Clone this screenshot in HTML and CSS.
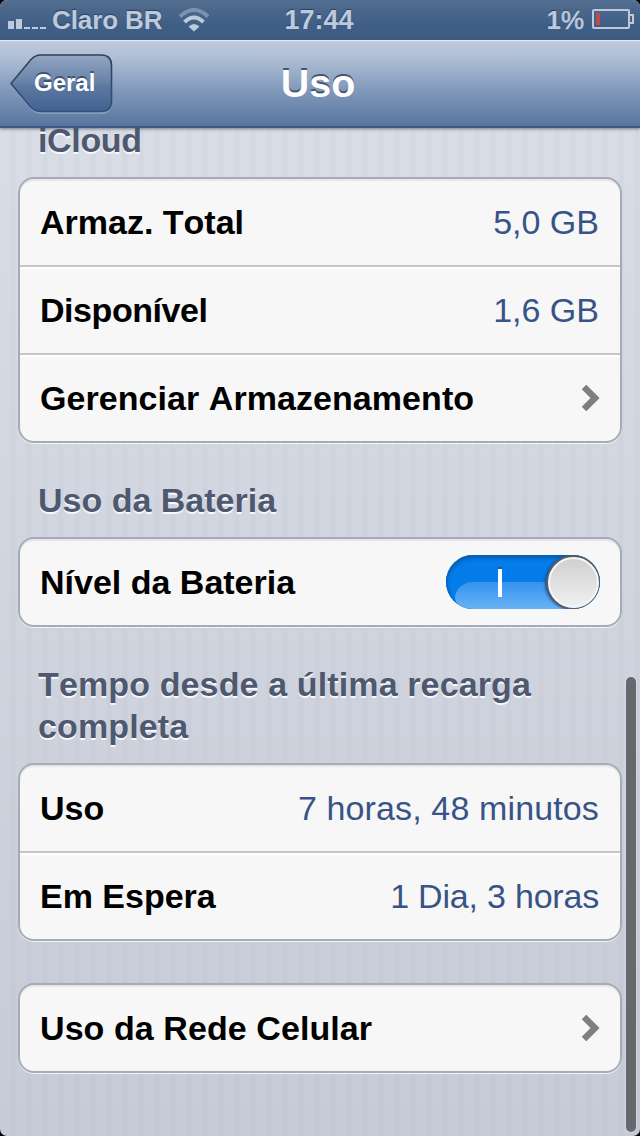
FILE: index.html
```html
<!DOCTYPE html>
<html lang="pt-BR">
<head>
<meta charset="utf-8">
<title>Uso</title>
<link rel="stylesheet" href="styles.css">
</head>
<body>
<div class="screen">
  <header class="status">
    <div class="carrier">
      <svg class="signal" width="38" height="20" viewBox="0 0 38 20"><path d="M0 11h6v8H0zM8 9h6v10H8zM16 17h6v2h-6zM24 17h6v2h-6zM32 17h6v2h-6z"/></svg>
      <span class="carrier-name">Claro BR</span>
      <svg class="wifi" width="32" height="24" viewBox="0 0 32 24"><g fill="none" stroke-width="4"><path class="faint" d="M2 8.500Q16-4.500 30 8.500"/><path class="lit" d="M6.500 14Q16 5 25.500 14"/></g><path class="dot" d="M10.500 18.500Q16 13.500 21.500 18.500L16 23.500z"/></svg>
    </div>
    <div class="clock">17:44</div>
    <div class="power"><span>1<span class="percent">%</span></span>
      <svg class="battery" width="42" height="20" viewBox="0 0 42 20"><rect class="line" x="1" y="1" width="36" height="18" rx="1"/><path class="line" d="M38 6h3v8h-3"/><path class="charge" d="M4 4h4v12H4z"/></svg>
    </div>
  </header>
  <nav class="bar">
    <a class="back">
      <svg class="back-shape" width="104" height="62" viewBox="0 0 104 62">
        <defs><linearGradient id="backFill" x1="0" y1="0" x2="0" y2="1"><stop offset="0" stop-color="#94a7c3"/><stop offset=".5" stop-color="#6680a7"/><stop offset=".55" stop-color="#5c78a2"/><stop offset="1" stop-color="#426290"/></linearGradient>
        <linearGradient id="backEdge" x1="0" y1="0" x2="0" y2="1"><stop offset="0" stop-color="#343f51"/><stop offset="1" stop-color="#345078"/></linearGradient></defs>
        <path class="glow" d="M1 31L21 6Q25 2.500 31 2.500H91Q102 2.500 102 13V49Q102 60 91 60H31Q25 60 21 55.500z"/>
        <path d="M1 29.500L21 5.500Q25 1 31 1H91Q101.500 1 101.500 11.500V47Q101.500 57.500 91 57.500H31Q25 57.500 21 53.500z" fill="url(#backFill)" stroke="url(#backEdge)" stroke-width="1.600"/>
      </svg>
      <span class="back-label">Geral</span>
    </a>
    <h1 class="title">Uso</h1>
  </nav>
  <main class="content">
    <h2 class="heading first">iCloud</h2>
    <section class="card">
      <div class="row"><span>Armaz. Total</span><span class="value">5,0 GB</span></div>
      <div class="row"><span class="available">Disponível</span><span class="value">1,6 GB</span></div>
      <div class="row"><span class="manage">Gerenciar Armazenamento</span><svg class="chevron" width="18" height="26" viewBox="0 0 18 26"><path d="M2 2L13 13L2 24"/></svg></div>
    </section>
    <h2 class="heading battery-heading">Uso da Bateria</h2>
    <section class="card">
      <div class="row"><span>Nível da Bateria</span><span class="switch"><span class="gloss"></span><span class="mark"></span><span class="knob"></span></span></div>
    </section>
    <h2 class="heading time-heading">Tempo desde a última recarga completa</h2>
    <section class="card">
      <div class="row"><span>Uso</span><span class="value usage">7 horas, 48 minutos</span></div>
      <div class="row"><span>Em Espera</span><span class="value standby">1 Dia, 3 horas</span></div>
    </section>
    <section class="card last">
      <div class="row"><span class="cellular">Uso da Rede Celular</span><svg class="chevron" width="18" height="26" viewBox="0 0 18 26"><path d="M2 2L13 13L2 24"/></svg></div>
    </section>
  </main>
  <div class="scrollbar"></div>
</div>
</body>
</html>
```
FILE: styles.css
```css
* { box-sizing: border-box; }
body { margin: 0; background: #000; font-family: "Liberation Sans", Arial, sans-serif; font-kerning: none; }
.screen { position: relative; width: 640px; height: 1136px; overflow: hidden; display: flex; flex-direction: column; border-radius: 7px; background: repeating-linear-gradient(90deg, rgba(90,110,150,0) 0 10px, rgba(90,110,150,.035) 11px 15px, rgba(90,110,150,0) 16px), linear-gradient(#dadfe8, #c7cbd6); }
.status { flex: none; height: 40px; padding: 0 6px 0 8px; display: grid; grid-template-columns: 1fr auto 1fr; align-items: center; background: linear-gradient(#526e90, #3f5e85 65%, #3e5c84); color: #bdcadb; font-weight: bold; font-size: 26px; line-height: 40px; text-shadow: 0 -1px 1px #2b405f; }
.carrier, .power { display: flex; align-items: center; }
.power { justify-content: flex-end; }
.signal { margin: 0 6px 0 0; fill: #bdcadb; }
.carrier-name { letter-spacing: -.1px; }
.wifi { margin: 0 0 0 16px; }
.faint { stroke: #7d92af; }
.lit { stroke: #bdcadb; }
.dot { fill: #bdcadb; }
.clock { margin-right: 4px; font-size: 27px; }
.percent { font-weight: normal; -webkit-text-stroke: .6px #bdcadb; }
.battery { margin: -2px 0 0 8px; }
.line { fill: none; stroke: #bdcadb; stroke-width: 2; }
.charge { fill: #c14a4d; }
.bar { flex: none; height: 88px; display: grid; grid-template-columns: 1fr auto 1fr; border-top: 1px solid #e3e9f0; border-bottom: 2px solid #3d5a85; background: linear-gradient(#bfcbdd, #a9bad2 25%, #8198ba 58%, #59759f); box-shadow: 0 1px 3px rgba(70,80,95,.7); z-index: 1; }
.back { display: grid; width: 104px; height: 62px; margin: 13px 0 0 10px; }
.back-shape, .back-label { grid-area: 1 / 1; }
.glow { fill: #a3b4ce; opacity: .55; }
.back-label { z-index: 1; padding-left: 24px; color: #fff; font-size: 24px; font-weight: bold; line-height: 58px; text-shadow: 0 -2px 0 #40536f; }
.title { margin: 0 4px 0 0; color: #fff; font-size: 39.500px; line-height: 84px; text-shadow: 0 -2px 0 #45556d; }
.content { padding: 0 18px; }
.heading { margin: 0; padding: 0 20px; color: #4e586f; font-size: 34px; line-height: 42px; text-shadow: 0 2px 0 #f7f9fc; }
.first { margin-top: -9px; padding-bottom: 16px; letter-spacing: -.35px; }
.battery-heading { padding-top: 36px; padding-bottom: 16px; }
.time-heading { padding-top: 36px; padding-bottom: 16px; letter-spacing: .13px; }
.card { border: 2px solid #a6abb5; border-radius: 16px; background: #f7f7f7; box-shadow: 0 1px 0 #f0f3f7, inset 0 2px 1px #e5e6e9; }
.row { height: 86px; padding: 0 21px 0 20px; display: flex; align-items: center; justify-content: space-between; font-size: 34px; font-weight: bold; color: #000; white-space: nowrap; }
.row + .row { height: 88px; border-top: 2px solid #c6c6c8; box-shadow: inset 0 2px 0 #fff; }
.available { letter-spacing: -.45px; }
.manage { letter-spacing: .06px; }
.cellular { letter-spacing: .08px; }
.value { color: #385487; font-weight: normal; }
.usage { letter-spacing: .13px; }
.standby { letter-spacing: -.2px; }
.chevron { margin-right: -1px; fill: none; stroke: #7f7f7f; stroke-width: 6.5; }
.last { margin-top: 42px; }
.switch { position: relative; width: 154px; height: 54px; margin-right: -1px; border-radius: 27px; overflow: hidden; background: #047ce9; box-shadow: inset 0 3px 4px #075aa8, inset 1px 0 2px #0767c3; }
.gloss { position: absolute; left: 9px; top: 27px; width: 130px; height: 27px; border-radius: 18px 0 0 18px / 16px 0 0 11px; background: linear-gradient(#3593ee, #68b2f5); }
.mark { position: absolute; left: 52px; top: 14px; width: 4px; height: 28px; background: #fff; box-shadow: 0 -2px 0 #075eae; }
.knob { position: absolute; right: 1.5px; top: 1.5px; width: 51px; height: 51px; border: 2px solid #f7f7f7; border-radius: 50%; background: linear-gradient(#d0d0d0, #f0f0f0); box-shadow: 0 0 0 2px #5b5d60, -2px 0 3px 1px #064d91; }
.scrollbar { position: absolute; left: 626px; top: 677px; width: 10px; height: 455px; border-radius: 5px; background: #66686d; box-shadow: 0 0 0 1px rgba(220,224,233,.5); }
```
